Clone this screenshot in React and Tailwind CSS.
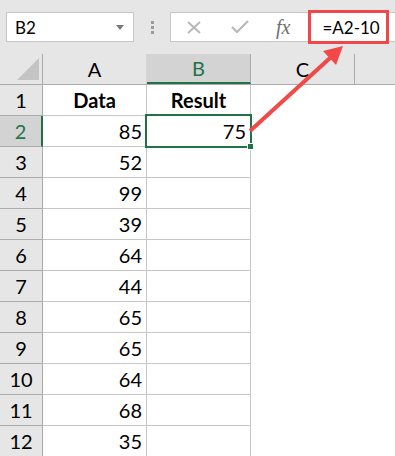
import React from "react";

const rows = [
  ["Data", "Result"],
  ["85", "75"],
  ["52", ""],
  ["99", ""],
  ["39", ""],
  ["64", ""],
  ["44", ""],
  ["65", ""],
  ["65", ""],
  ["64", ""],
  ["68", ""],
  ["35", ""],
];

export default function App() {
  return (
    <div className="relative w-[395px] h-[456px] overflow-hidden bg-white font-['Lato',sans-serif] text-black">
      {/* Toolbar */}
      <div className="h-[54px] bg-[#e6e6e6] flex items-start pt-[12px]">
        <div className="ml-[6px] w-[128px] h-[30px] bg-white border border-[#c6c6c6] flex items-center justify-between pl-[8px] pr-[9px]">
          <span className="text-[17px] leading-none">B2</span>
          <svg width="8" height="5" viewBox="0 0 8 5">
            <polygon points="0,0 8,0 4,5" fill="#7a7a7a" />
          </svg>
        </div>
        <div className="w-[36px] h-[30px] flex flex-col items-center justify-center gap-[2px]">
          <div className="w-[3px] h-[3px] bg-[#9a9a9a]" />
          <div className="w-[3px] h-[3px] bg-[#9a9a9a]" />
          <div className="w-[3px] h-[3px] bg-[#9a9a9a]" />
        </div>
        <div className="flex-1 h-[30px] bg-white border border-r-0 border-[#c6c6c6] flex items-center">
          <svg className="ml-[15px]" width="16" height="13" viewBox="0 0 16 13">
            <path d="M2 1 L14 12 M14 1 L2 12" stroke="#b8b8b8" strokeWidth="2" fill="none" />
          </svg>
          <svg className="ml-[29px]" width="18" height="14" viewBox="0 0 18 14">
            <path d="M1 7 L6 12 L17 1" stroke="#b8b8b8" strokeWidth="2.2" fill="none" />
          </svg>
          <span className="ml-[27px] font-['Liberation_Serif',serif] italic text-[20px] leading-none text-[#6e6e6e]">fx</span>
          <span className="ml-[32px] text-[17px] leading-none">=A2-10</span>
        </div>
      </div>

      {/* Column headers */}
      <div className="flex h-[31px] bg-[#e6e6e6] border-b border-[#ababab]">
        <div className="w-[43px] shrink-0 border-r border-[#ababab] relative">
          <svg className="absolute left-[16px] top-[4px]" width="24" height="23" viewBox="0 0 24 23">
            <polygon points="1,22 23,0 23,22" fill="#c4c4c4" />
          </svg>
        </div>
        <div className="w-[104px] shrink-0 border-r border-[#d4d4d4] flex items-center justify-center text-[20px]">A</div>
        <div className="w-[104px] shrink-0 bg-[#d3d3d3] border-r border-[#ababab] border-b-2 border-b-[#217346] flex items-center justify-center text-[20px] text-[#217346]">B</div>
        <div className="w-[104px] shrink-0 border-r border-[#ababab] flex items-center justify-center text-[20px]">C</div>
        <div className="flex-1" />
      </div>

      {/* Rows */}
      {rows.map((r, i) => {
        const sel = i === 1;
        return (
          <div key={i} className="flex h-[31px]">
            <div
              className={
                sel
                  ? "w-[43px] shrink-0 bg-[#d3d3d3] border-b border-[#ababab] border-r-2 border-r-[#217346] flex items-center justify-center text-[20px] text-[#217346]"
                  : "w-[43px] shrink-0 bg-[#e6e6e6] border-b border-r border-[#ababab] flex items-center justify-center text-[20px]"
              }
            >
              {i + 1}
            </div>
            <div
              className={
                i === 0
                  ? "w-[104px] shrink-0 border-b border-r border-[#c6c6c6] flex items-center justify-center font-bold text-[20px]"
                  : "w-[104px] shrink-0 border-b border-r border-[#c6c6c6] flex items-center justify-end pr-[4px] text-[20px]"
              }
            >
              {r[0]}
            </div>
            <div
              className={
                i === 0
                  ? "w-[104px] shrink-0 border-b border-r border-[#c6c6c6] flex items-center justify-center font-bold text-[20px]"
                  : "w-[104px] shrink-0 border-b border-r border-[#c6c6c6] flex items-center justify-end pr-[4px] text-[20px]"
              }
            >
              {r[1]}
            </div>
            <div className="flex-1" />
          </div>
        );
      })}

      {/* Selection box */}
      <div className="absolute left-[145px] top-[114px] w-[107px] h-[34px] border-2 border-[#217346]" />
      <div className="absolute left-[247px] top-[143px] w-[7px] h-[7px] bg-[#217346] border border-white" />

      {/* Red highlight box */}
      <div className="absolute left-[308px] top-[10px] w-[81px] h-[34px] border-[3px] border-[#f04848]" />

      {/* Arrow */}
      <svg className="absolute left-0 top-0 pointer-events-none" width="395" height="456" viewBox="0 0 395 456">
        <line x1="250" y1="131" x2="330" y2="58" stroke="#f24848" strokeWidth="4" />
        <polygon points="343,46 336,65 323,51" fill="#f24848" />
      </svg>
    </div>
  );
}
